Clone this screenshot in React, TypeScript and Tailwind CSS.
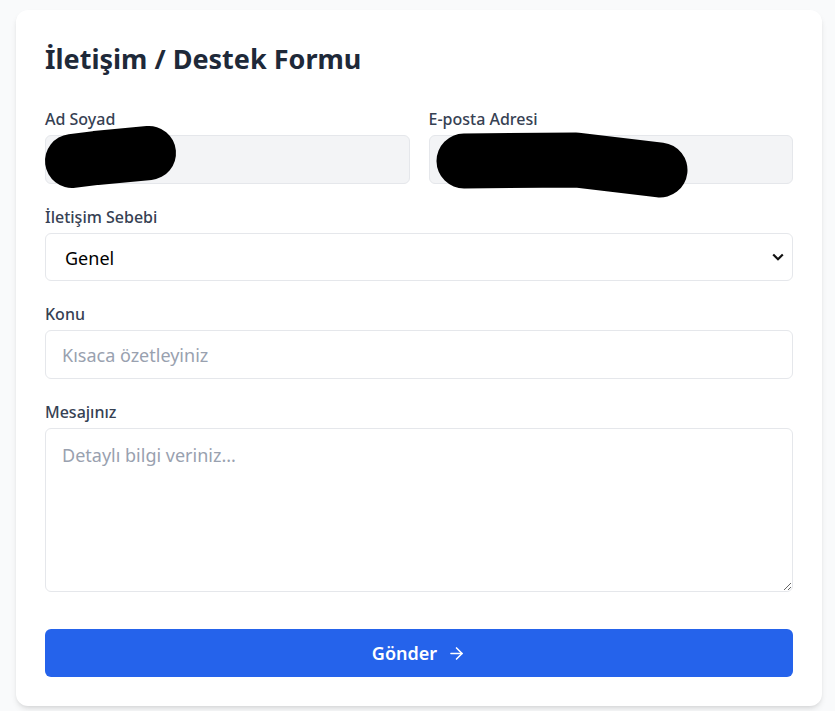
import { ArrowRight } from 'lucide-react';

const Label = ({ children }: { children: React.ReactNode }) => (
  <label className="block text-base leading-6 font-medium text-gray-700 mb-1">
    {children}
  </label>
);

const App = () => {
  return (
    <div
      className="min-h-screen bg-gray-50 pt-[10px] px-4"
      style={{ fontFamily: '"Noto Sans", "Open Sans", sans-serif' }}
    >
      <div className="relative w-[806px] bg-white rounded-xl shadow-md p-[29px]">
        <h1 className="mt-[2px] text-[27px] leading-9 font-bold text-gray-800 mb-[30px]">
          İletişim / Destek Formu
        </h1>

        <form className="flex flex-col gap-[21px]">
          <div className="grid grid-cols-2 gap-[19px]">
            <div>
              <Label>Ad Soyad</Label>
              <input
                readOnly
                className="w-full h-[49px] px-4 text-lg bg-gray-100 border border-gray-200 rounded-md outline-none"
              />
            </div>
            <div>
              <Label>E-posta Adresi</Label>
              <input
                readOnly
                className="w-full h-[49px] px-4 text-lg bg-gray-100 border border-gray-200 rounded-md outline-none"
              />
            </div>
          </div>

          <div>
            <Label>İletişim Sebebi</Label>
            <div className="relative">
              <select className="w-full h-[48px] pl-[19px] pr-10 pt-0.5 text-lg text-black bg-white border border-gray-200 rounded-md appearance-none outline-none">
                <option>Genel</option>
              </select>
              <svg
                className="absolute right-[9px] top-1/2 -translate-y-1/2 pointer-events-none"
                width="12"
                height="8"
                viewBox="0 0 12 8"
                fill="none"
              >
                <path d="M1.2 1.5 L6 6.2 L10.8 1.5" stroke="#111" strokeWidth="2.2" />
              </svg>
            </div>
          </div>

          <div>
            <Label>Konu</Label>
            <input
              placeholder="Kısaca özetleyiniz"
              className="w-full h-[49px] px-4 text-lg text-gray-800 placeholder:text-gray-400 bg-white border border-gray-200 rounded-md outline-none"
            />
          </div>

          <div>
            <Label>Mesajınız</Label>
            <textarea
              placeholder="Detaylı bilgi veriniz..."
              className="block w-full h-[164px] px-4 pt-3 text-lg text-gray-800 placeholder:text-gray-400 bg-white border border-gray-200 rounded-md outline-none"
            />
          </div>

          <button
            type="button"
            className="mt-4 flex items-center justify-center gap-2.5 w-full h-[48px] bg-[#2563eb] text-white text-lg font-semibold rounded-md"
          >
            Gönder
            <ArrowRight size={19} strokeWidth={2} />
          </button>
        </form>

        {/* redaction marks over the name and e-mail fields */}
        <svg
          className="absolute inset-0 pointer-events-none"
          width="806"
          height="695"
          viewBox="0 0 806 695"
        >
          <polyline
            points="56,151 80,148 133,143"
            fill="none"
            stroke="#000"
            strokeWidth="54"
            strokeLinecap="round"
            strokeLinejoin="round"
          />
          <polyline
            points="448,151 560,150 644,160"
            fill="none"
            stroke="#000"
            strokeWidth="55"
            strokeLinecap="round"
            strokeLinejoin="round"
          />
        </svg>
      </div>
    </div>
  );
};

export default App;
